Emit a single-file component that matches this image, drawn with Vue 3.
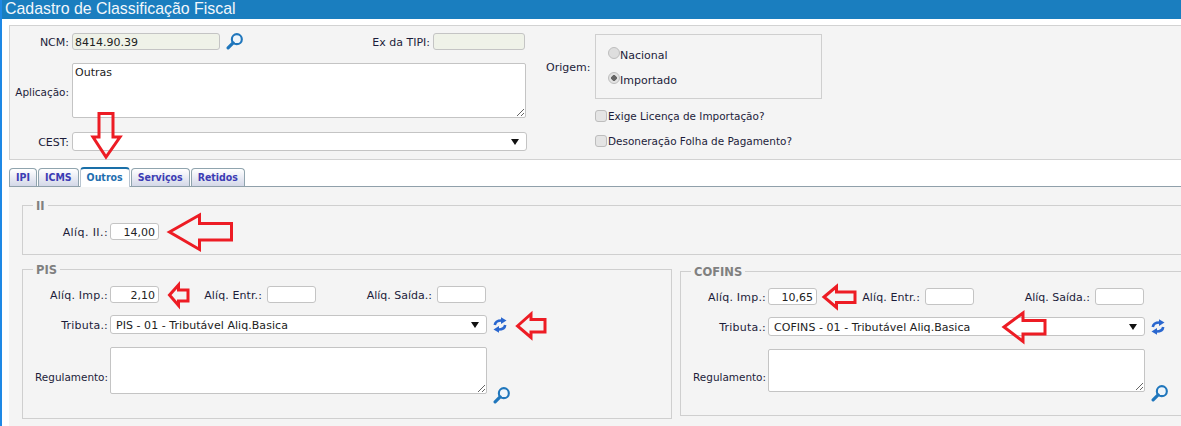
<script setup>
const taxBlocks = [
  { name: 'PIS', cls: 'pis', imp: '2,10', trib: 'PIS - 01 - Tributável Aliq.Basica' },
  { name: 'COFINS', cls: 'cofins', imp: '10,65', trib: 'COFINS - 01 - Tributável Aliq.Basica' }
]
const tabs = ['IPI', 'ICMS', 'Outros', 'Serviços', 'Retidos']
const arrows = [
  '99,113.500 113,113.500 113,137 120,137 106,157 93,137 99,137',
  '169.500,232 199.500,215 199.500,223.500 231.500,223.500 231.500,240 199.500,240 199.500,249.500',
  '169.500,295 178.500,285 178.500,290 188,290 188,301 178.500,301 178.500,305.500',
  '517.500,326 531,314 531,319.500 545,319.500 545,332 531,332 531,337.500',
  '824,297 836.500,286.500 836.500,292 855,292 855,302.500 836.500,302.500 836.500,307.500',
  '1004,327 1023,313 1023,320.500 1045,320.500 1045,334 1023,334 1023,341.500'
]
</script>

<template>
  <div class="page">
    <div class="title">Cadastro de Classificação Fiscal</div>

    <section class="head-panel">
      <div class="head-left">
        <div class="row r-ncm">
          <label class="lbl l-head">NCM:</label>
          <input class="inp ro w-ncm" value="8414.90.39" readonly />
          <svg class="ico search" viewBox="0 0 16 16"><circle cx="10.200" cy="5.800" r="4.700" fill="#eef5fb" stroke="#1f76bc" stroke-width="2"/><path d="M6.700 9.300 2 14" stroke="#1f76bc" stroke-width="3" stroke-linecap="round"/></svg>
          <label class="lbl l-tipi">Ex da TIPI:</label>
          <input class="inp ro w-tipi" readonly />
        </div>
        <div class="row r-app">
          <label class="lbl l-head narrow l-app">Aplicação:</label>
          <textarea class="ta w-app">Outras</textarea>
        </div>
        <div class="row r-cest">
          <label class="lbl l-head l-cest">CEST:</label>
          <div class="sel w-cest"><span></span><i class="caret"></i></div>
        </div>
      </div>

      <div class="origem">
        <label class="lbl l-orig">Origem:</label>
        <div class="orig-col">
          <div class="radio-box">
            <div class="opt"><i class="radio"></i>Nacional</div>
            <div class="opt"><i class="radio on"></i>Importado</div>
          </div>
          <div class="chk c1 narrow"><i class="box"></i>Exige Licença de Importação?</div>
          <div class="chk c2 narrow"><i class="box"></i>Desoneração Folha de Pagamento?</div>
        </div>
      </div>
    </section>

    <nav class="tabs">
      <div v-for="t in tabs" :key="t" class="tab" :class="{ active: t === 'Outros' }">{{ t }}</div>
    </nav>

    <section class="content">
      <fieldset class="fs fs-ii">
        <legend class="leg">II</legend>
        <div class="row">
          <label class="lbl l-ii">Alíq. II.:</label>
          <input class="inp num w-num" value="14,00" />
        </div>
      </fieldset>

      <div class="pair">
        <fieldset v-for="b in taxBlocks" :key="b.name" class="fs" :class="b.cls">
          <legend class="leg">{{ b.name }}</legend>
          <div class="row">
            <label class="lbl l-tax spaced">Alíq. Imp.:</label>
            <input class="inp num w-num" :value="b.imp" />
            <label class="lbl l-entr spaced">Alíq. Entr.:</label>
            <input class="inp w-num" />
            <label class="lbl l-said">Alíq. Saída.:</label>
            <input class="inp w-num" />
          </div>
          <div class="row r-trib">
            <label class="lbl l-tax spaced l-trib">Tributa.:</label>
            <div class="sel w-trib"><span>{{ b.trib }}</span><i class="caret"></i></div>
            <svg class="ico refresh" viewBox="0 0 14 16">
              <path d="M1.800 8C2.200 4.800 4.800 3.500 8.500 3.500" fill="none" stroke="#2a67cf" stroke-width="2.600"/>
              <polygon points="8,0.300 13.500,3.600 8,7" fill="#2a67cf"/>
              <path d="M12.200 8C11.800 11.200 9.200 12.500 5.500 12.500" fill="none" stroke="#2a67cf" stroke-width="2.600"/>
              <polygon points="6,9 0.500,12.400 6,15.700" fill="#2a67cf"/>
            </svg>
          </div>
          <div class="row r-reg">
            <label class="lbl l-tax narrow l-reg">Regulamento:</label>
            <textarea class="ta w-reg"></textarea>
            <svg class="ico search s-reg" viewBox="0 0 16 16"><circle cx="10.200" cy="5.800" r="4.700" fill="#eef5fb" stroke="#1f76bc" stroke-width="2"/><path d="M6.700 9.300 2 14" stroke="#1f76bc" stroke-width="3" stroke-linecap="round"/></svg>
          </div>
        </fieldset>
      </div>
    </section>

    <svg class="marks" viewBox="0 0 1181 426" width="1181" height="426">
      <polygon v-for="(p, i) in arrows" :key="i" :points="p" fill="none" stroke="#ed1c24" stroke-width="3"/>
    </svg>
  </div>
</template>

<style>
html, body { margin: 0; background: #fff; }
</style>

<style scoped>
.page {
  position: relative; width: 1181px; height: 426px; overflow: hidden; box-sizing: border-box;
  border-left: 2px solid #1e88e5; background: #fff;
  font: 11px "DejaVu Sans", Verdana, sans-serif; color: #1c1c3a;
}
.narrow { font-size: 10.45px; }
.spaced { letter-spacing: .2px; }
.title {
  margin-left: -2px; height: 19px; padding-left: 5px; background: #1a7ebf; color: #f2f7fb;
  font: 15.900px/18px "Liberation Sans", Arial, sans-serif;
}
.head-panel {
  display: flex; box-sizing: border-box; height: 135px; margin: 6px 0 0 7px;
  background: #f4f4f4; border: 1px solid #d2d2d2; border-right: 0;
}
.head-left { width: 537px; flex: none; }
.row { display: flex; align-items: center; }
.lbl { display: block; flex: none; text-align: right; white-space: nowrap; padding-top: 1px; }
.l-head { width: 59px; margin-right: 3px; }
.l-app { padding-top: 3px; }
.l-cest { padding-top: 2px; }
.r-ncm { margin-top: 7px; height: 17px; }
.r-app { margin-top: 13px; height: 55px; }
.r-cest { margin-top: 13px; height: 20px; }
.l-tipi { width: 110px; margin-left: 77px; margin-right: 3px; }
.inp {
  box-sizing: border-box; height: 17px; padding: 1px 3px 0 2px; border: 1px solid #c4c4c4; border-radius: 3px;
  background: #fff; font: inherit; color: #222; outline: none; flex: none;
}
.ro { background: #eff2e8; }
.num { text-align: right; }
.w-ncm { width: 148px; }
.w-tipi { width: 92px; }
.w-num { width: 49px; }
.ta {
  display: block; box-sizing: border-box; padding: 2px; border: 1px solid #c4c4c4; border-radius: 2px;
  background: #fff; font: inherit; color: #222; outline: none; flex: none; margin: 0;
}
.w-app { width: 454px; height: 55px; }
.sel {
  display: flex; align-items: center; justify-content: space-between; box-sizing: border-box; flex: none;
  padding: 1px 7px 0 5px; border: 1px solid #c4c4c4; border-radius: 3px; background: #fff; color: #222;
  letter-spacing: .05px;
}
.w-cest { width: 455px; height: 19px; }
.w-trib { width: 377px; height: 19px; }
.caret { width: 0; height: 0; border: 4px solid transparent; border-top: 6px solid #111; border-bottom: 0; }
.ico { flex: none; display: block; }
.search { width: 17px; height: 17px; margin-left: 6px; }
.origem { display: flex; align-items: flex-start; }
.l-orig { width: 44px; margin: 34px 5px 0 -1px; }
.orig-col { display: flex; flex-direction: column; }
.radio-box {
  box-sizing: border-box; width: 227px; height: 65px; margin-top: 8px; padding: 13px 12px 0;
  border: 1px solid #cfcfcf; display: flex; flex-direction: column; gap: 11px;
}
.opt { display: flex; align-items: flex-start; height: 14px; line-height: 16px; }
.radio {
  box-sizing: border-box; width: 12px; height: 12px; margin-top: -1px; border-radius: 50%; flex: none;
  border: 1px solid #bdbdbd; background: #dedede;
}
.radio.on { background: radial-gradient(circle, #666 0 2.600px, #e2e2e2 3px); }
.chk { display: flex; align-items: center; height: 14px; }
.c1 { margin-top: 10px; }
.c2 { margin-top: 11px; }
.box {
  box-sizing: border-box; width: 12px; height: 12px; margin-right: 1px; border: 1px solid #bdbdbd;
  border-radius: 3px; background: #e4e4e4; flex: none;
}
.tabs { display: flex; gap: 1px; height: 26px; margin-left: 7px; align-items: flex-end; box-sizing: border-box; }
.tab {
  box-sizing: border-box; height: 18px; padding: 0 6px; line-height: 17px; font-weight: 700;
  font-family: "DejaVu Sans Condensed", "DejaVu Sans", sans-serif; font-size: 10.500px;
  color: #3c3cb4; background: linear-gradient(#fff, #d4d8e8); border: 1px solid #90a4ae; border-bottom: 0;
  border-radius: 4px 4px 0 0;
}
.tab.active {
  height: 20px; background: #fff; color: #1f6fb0; border: 1px solid #b8c4d0; border-top: 2px solid #1a6fa8; border-bottom: 0;
  position: relative; top: 1px;
}
.content {
  height: 240px; margin-left: 7px; background: #f4f4f4; border-top: 1px solid #90a0aa; box-sizing: border-box;
  padding: 10px 0 0 13px;
}
.fs {
  box-sizing: border-box; margin: 0; min-width: 0; border: 1px solid #cfcfcf; padding: 0;
}
.leg { padding: 2px 3px 0; margin-left: 10px; font-weight: 700; color: #808080; font-size: 11.500px; line-height: 14px; }
.fs-ii { height: 58px; margin-right: -2px; padding-top: 10px; }
.l-ii { width: 85px; margin-right: 2px; letter-spacing: .4px; }
.pair { display: flex; align-items: flex-start; margin-top: 6px; }
.pis { width: 650px; height: 158px; padding-top: 9px; flex: none; }
.cofins { width: 520px; height: 153px; margin: 2px 0 0 8px; padding-top: 9px; flex: none; }
.l-tax { width: 85px; margin-right: 2px; }
.l-trib { padding-top: 2px; }
.l-entr { width: 60px; margin: 0 5px 0 43px; letter-spacing: .1px; }
.l-said { width: 66px; margin: 0 5px 0 50px; }
.r-trib { margin-top: 12px; height: 19px; }
.refresh { width: 14px; height: 16px; margin-left: 6px; }
.r-reg { margin-top: 13px; height: 47px; align-items: center; }
.l-reg { padding-top: 12px; }
.w-reg { width: 377px; height: 47px; }
.cofins .w-reg { height: 43px; }
.cofins .r-reg { height: 43px; }
.s-reg { align-self: flex-end; margin: 0 0 -10px 6px; }
.marks { position: absolute; left: -2px; top: 0; pointer-events: none; }
</style>
